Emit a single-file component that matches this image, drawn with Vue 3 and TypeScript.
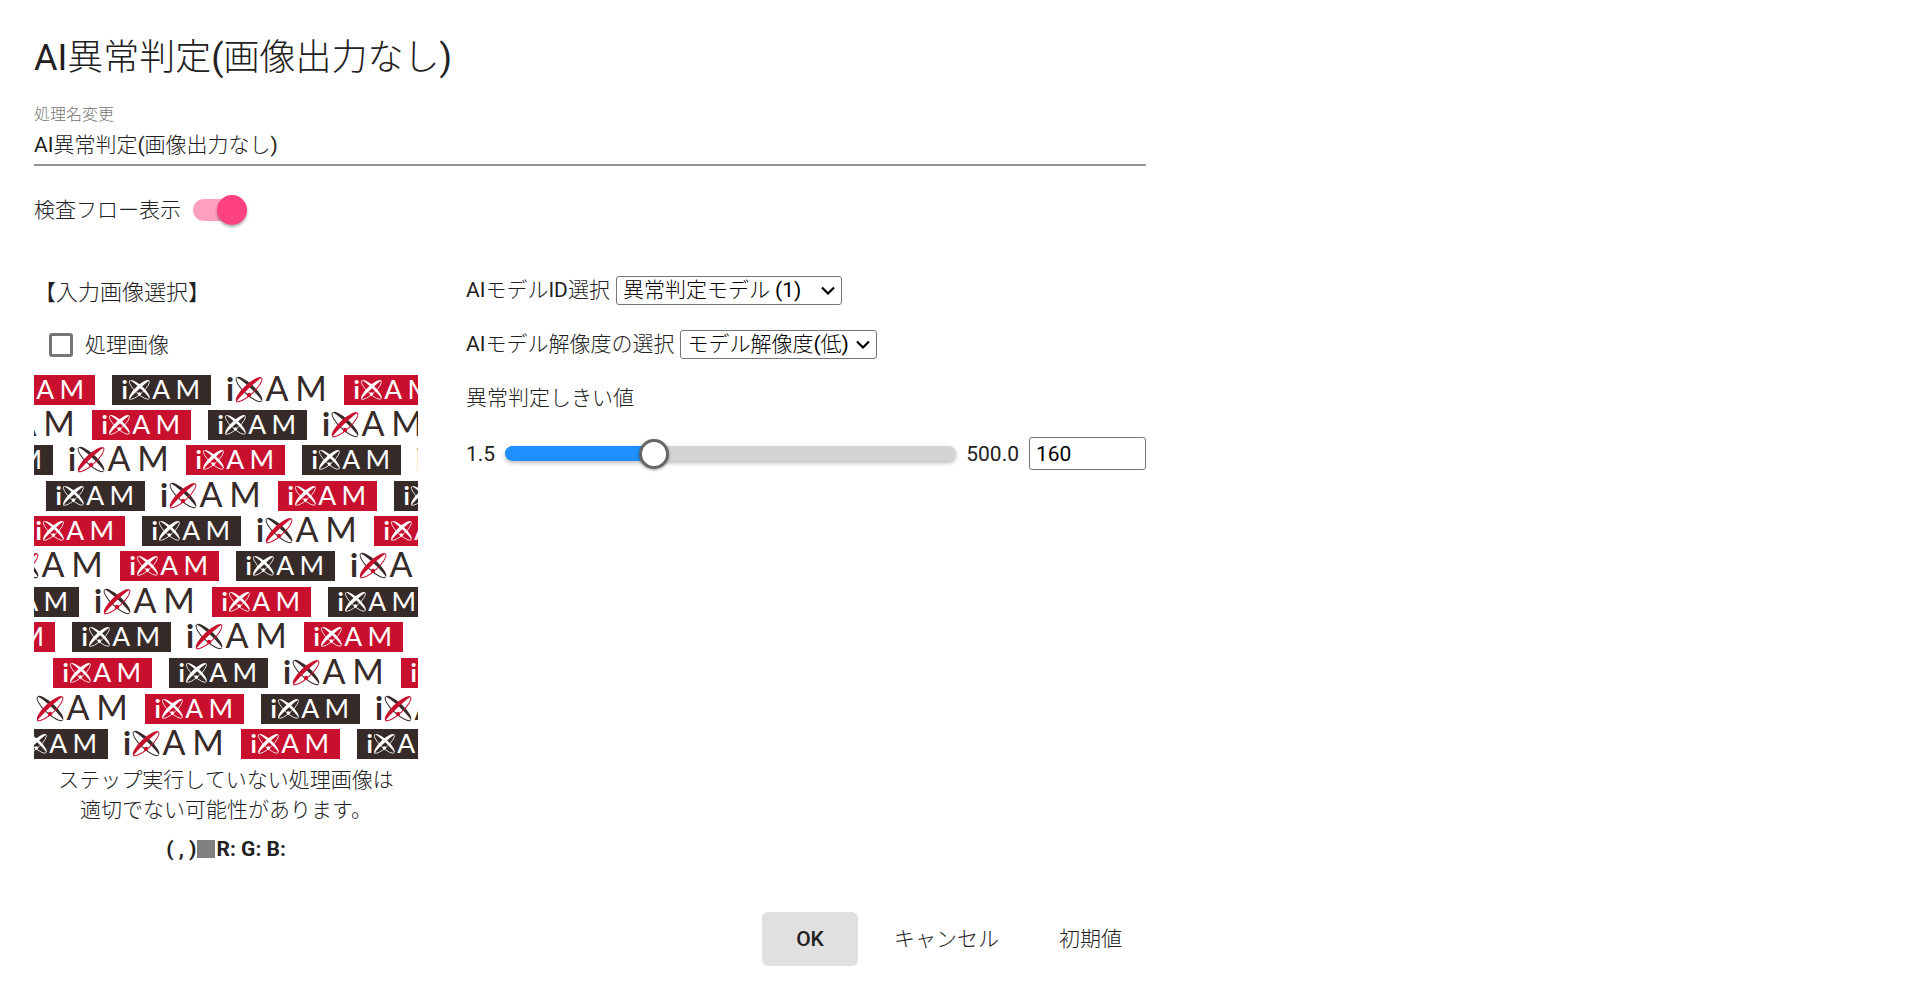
<script setup lang="ts">
import { computed, ref } from 'vue'

type Tone = 'red' | 'dark' | 'plain'

interface Tile {
  x: number
  y: number
  tone: Tone
}

const name = ref('AI異常判定(画像出力なし)')
const showFlow = ref(true)
const useProcessed = ref(false)
const modelId = ref('1')
const resolution = ref('low')
const min = 1.5
const max = 500
const threshold = ref(160)

const fillWidth = computed(() => {
  const ratio = (threshold.value - min) / (max - min)
  return `calc(15px + (100% - 30px) * ${ratio})`
})

const order: Tone[] = ['red', 'dark', 'plain']
const rows: { y: number; x: number; first: number }[] = [
  { y: 0, x: -38, first: 0 },
  { y: 35, x: -58, first: 2 },
  { y: 70, x: -80, first: 1 },
  { y: 106, x: 12, first: 1 },
  { y: 141, x: -8, first: 0 },
  { y: 176, x: -30, first: 2 },
  { y: 212, x: -54, first: 1 },
  { y: 247, x: -78, first: 0 },
  { y: 283, x: -97, first: 2 },
  { y: 319, x: -5, first: 2 },
  { y: 354, x: -25, first: 1 }
]
const tiles: Tile[] = rows.flatMap((row) =>
  Array.from({ length: 5 }, (_, i) => ({
    x: row.x + i * 116,
    y: row.y,
    tone: order[(row.first + i) % 3]
  }))
)
</script>

<template>
  <main class="dialog">
    <h1>AI異常判定(画像出力なし)</h1>

    <div class="field">
      <label for="name">処理名変更</label>
      <input id="name" v-model="name" type="text" />
    </div>

    <label class="toggle">
      <span>検査フロー表示</span>
      <input v-model="showFlow" type="checkbox" role="switch" />
    </label>

    <div class="body">
      <section class="source">
        <h2>【入力画像選択】</h2>
        <label class="check">
          <input v-model="useProcessed" type="checkbox" />
          <span>処理画像</span>
        </label>
        <svg class="preview" viewBox="0 0 384 384" role="img" aria-label="iXAM">
          <defs>
            <g id="logo">
              <text x="-2" y="24" class="logo-text stem">i</text>
              <text x="49" y="24" class="logo-text mid">A</text>
              <text x="83" y="24" class="logo-text mid">M</text>
              <g class="orbit" transform="translate(21 12.5) rotate(43)">
                <path class="trail" d="M-17 0A17 5 0 0 0 17 0" />
                <path class="band" d="M-17.5 0A17.5 5.5 0 0 1 17.5 0A17.5 2 0 0 0 -17.5 0Z" />
              </g>
              <g class="orbit accent" transform="translate(21 12.5) rotate(-43)">
                <path class="trail" d="M-17 0A17 5 0 0 0 17 0" />
                <path class="band" d="M-17.5 0.5A17.5 5.5 0 0 1 17.5 0A17.5 1.5 0 0 0 -16 1.5Z" />
              </g>
              <circle class="core" cx="21" cy="18" r="2.2" />
            </g>
          </defs>
          <rect class="paper" width="384" height="384" />
          <g
            v-for="(tile, i) in tiles"
            :key="i"
            :class="['tile', tile.tone]"
            :transform="`translate(${tile.x} ${tile.y})`"
          >
            <rect v-if="tile.tone !== 'plain'" class="plate" width="99" height="30" />
            <use
              href="#logo"
              :transform="tile.tone === 'plain' ? 'translate(0 2)' : 'translate(11 5) scale(0.78)'"
            />
          </g>
        </svg>
        <p class="note">ステップ実行していない処理画像は<br />適切でない可能性があります。</p>
        <p class="pixel">( , )<span class="swatch"></span>R: G: B:</p>
      </section>

      <section class="params">
        <div class="row">
          <label for="model">AIモデルID選択</label>
          <select id="model" v-model="modelId" class="model">
            <option value="1">異常判定モデル (1)</option>
          </select>
        </div>
        <div class="row">
          <label for="resolution">AIモデル解像度の選択</label>
          <select id="resolution" v-model="resolution">
            <option value="low">モデル解像度(低)</option>
          </select>
        </div>
        <div class="row">
          <label for="threshold">異常判定しきい値</label>
        </div>
        <div class="range">
          <span>1.5</span>
          <div class="track">
            <div class="fill" :style="{ width: fillWidth }"></div>
            <input id="threshold" v-model.number="threshold" type="range" :min="min" :max="max" step="0.5" />
          </div>
          <span>500.0</span>
          <input v-model.number="threshold" class="number" type="number" aria-label="異常判定しきい値" />
        </div>
      </section>
    </div>

    <footer>
      <button class="primary" type="button">OK</button>
      <button type="button">キャンセル</button>
      <button type="button">初期値</button>
    </footer>
  </main>
</template>

<style>
body {
  margin: 0;
  background: #fff;
}
</style>

<style scoped>
.dialog {
  box-sizing: border-box;
  width: 60%;
  min-width: 900px;
  padding: 35px 6px 16px 34px;
  color: #212121;
  font: 400 21px/30px Roboto, "Noto Sans CJK JP Light", "Noto Sans CJK JP", sans-serif;
}
.dialog * {
  box-sizing: border-box;
}
input,
select,
button {
  margin: 0;
  color: inherit;
  font: inherit;
}
h1 {
  margin: 0;
  font-size: 36px;
  font-weight: 400;
  line-height: 46px;
}
.field {
  display: flex;
  flex-direction: column;
  margin-top: 23px;
  border-bottom: 2px solid #949494;
}
.field label {
  color: #757575;
  font-size: 16px;
  line-height: 22px;
}
.field input {
  height: 38px;
  padding: 0 0 4px;
  border: 0;
  outline: 0;
  background: none;
}
.toggle {
  display: flex;
  align-items: center;
  gap: 12px;
  margin-top: 29px;
}
.toggle input {
  appearance: none;
  display: flex;
  align-items: center;
  justify-content: flex-end;
  width: 48px;
  height: 22px;
  border-radius: 11px;
  background: #ff9fbf;
}
.toggle input::before {
  content: "";
  flex: none;
  width: 30px;
  height: 30px;
  margin-right: -6px;
  border-radius: 50%;
  background: #ff4081;
  box-shadow: 0 2px 3px #0005;
}
.body {
  display: flex;
  gap: 48px;
  margin-top: 50px;
}
.source {
  width: 384px;
}
h2 {
  margin: 0;
  font-size: 22px;
  font-weight: 400;
  line-height: 36px;
}
.check {
  display: flex;
  align-items: center;
  gap: 12px;
  margin: 19px 0 15px 15px;
}
.check input {
  appearance: none;
  width: 24px;
  height: 24px;
  border: 3px solid #757575;
  border-radius: 3px;
}
.preview {
  display: block;
  width: 100%;
}
.paper {
  fill: #fff;
}
.red {
  color: #fff;
  --plate: #c8102e;
  --accent: #fff;
}
.dark {
  color: #fff;
  --plate: #362b29;
  --accent: #fff;
}
.plain {
  color: #362b29;
  --accent: #c8102e;
}
.plate {
  fill: var(--plate);
}
.logo-text {
  fill: currentColor;
  font: 400 34px Lato, sans-serif;
}
.stem {
  font-weight: 700;
  font-size: 32px;
}
.mid {
  text-anchor: middle;
}
.accent {
  color: var(--accent);
}
.trail {
  fill: none;
  stroke: currentColor;
  stroke-width: 1px;
}
.band {
  fill: currentColor;
}
.core {
  fill: var(--accent);
}
.note {
  margin: 6px 0 0;
  text-align: center;
}
.pixel {
  display: flex;
  justify-content: center;
  align-items: center;
  margin: 9px 0 0;
  font-weight: 700;
}
.swatch {
  width: 18px;
  height: 18px;
  margin: 0 1px;
  background: #808080;
}
.params {
  flex: 1;
}
.row {
  display: flex;
  align-items: center;
  gap: 6px;
  height: 30px;
  margin-bottom: 24px;
}
select {
  appearance: none;
  width: 197px;
  height: 29px;
  padding: 0 24px 0 6px;
  border: 1px solid #767676;
  border-radius: 3px;
  background: #fff url("data:image/svg+xml,%3Csvg xmlns='http://www.w3.org/2000/svg' width='14' height='9'%3E%3Cpath d='M1 1.5l6 6 6-6' fill='none' stroke='%23000' stroke-width='2.2'/%3E%3C/svg%3E") right 6px center no-repeat;
  color: #000;
  line-height: 24px;
}
.model {
  width: 226px;
}
.range {
  display: flex;
  align-items: center;
  gap: 10px;
}
.track {
  display: flex;
  flex: 1;
  align-items: center;
  position: relative;
  height: 15px;
  border-radius: 8px;
  background: #d3d3d3;
  box-shadow: 0 2px 4px #0004;
}
.fill {
  height: 15px;
  border-radius: 8px 0 0 8px;
  background: #1e90ff;
}
.track input {
  position: absolute;
  inset: 0;
  appearance: none;
  width: 100%;
  background: none;
}
.track input::-webkit-slider-thumb {
  appearance: none;
  width: 30px;
  height: 30px;
  border: 3px solid #666;
  border-radius: 50%;
  background: #fff;
  box-shadow: 0 1px 3px #0006;
}
.number {
  width: 117px;
  height: 33px;
  padding: 0 6px;
  border: 1px solid #767676;
  border-radius: 3px;
  color: #000;
}
footer {
  display: flex;
  justify-content: flex-end;
  margin-top: 48px;
}
button {
  height: 54px;
  padding: 0 24px;
  border: 0;
  border-radius: 6px;
  background: none;
}
.primary {
  width: 96px;
  margin-right: 12px;
  background: #e0e0e0;
  font-weight: 500;
}
footer button:nth-child(2) {
  margin-right: 12px;
}
</style>
